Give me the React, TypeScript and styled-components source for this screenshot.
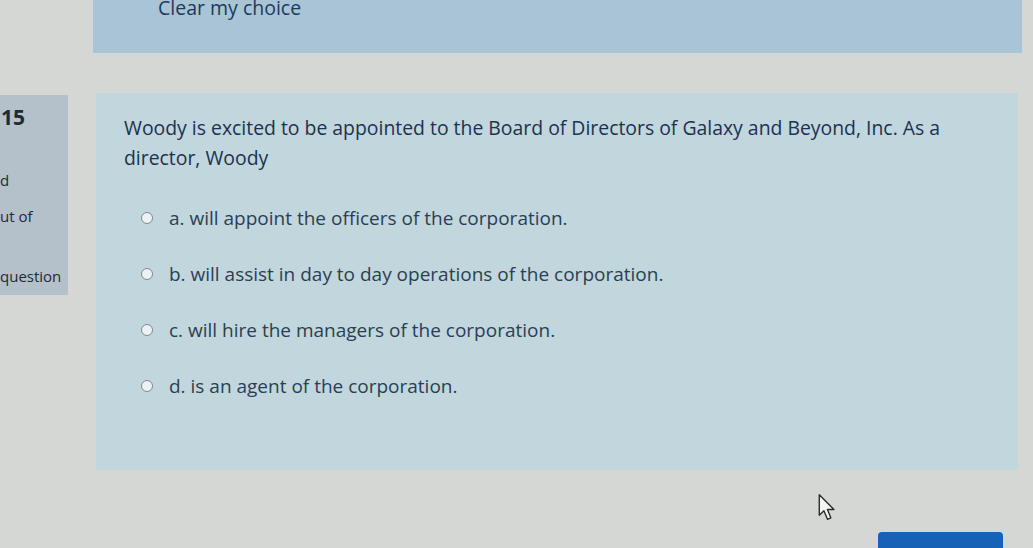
import styled, { createGlobalStyle } from 'styled-components';

const GlobalStyle = createGlobalStyle`
  html, body {
    margin: 0;
    padding: 0;
    background: #d4d7d3;
    font-family: "Open Sans", "Noto Sans", sans-serif;
    overflow: hidden;
  }
`;

const options = [
  'a. will appoint the officers of the corporation.',
  'b. will assist in day to day operations of the corporation.',
  'c. will hire the managers of the corporation.',
  'd. is an agent of the corporation.',
];

export default function App() {
  return (
    <>
      <GlobalStyle />
      <Page>
        <TopPanel>
          <ClearLink>Clear my choice</ClearLink>
        </TopPanel>
        <QuestionRow>
          <InfoColumn>
            <QuestionNo>15</QuestionNo>
            <InfoLine $top={42}>d</InfoLine>
            <InfoLine $top={19}>ut of</InfoLine>
            <InfoLine $top={43}>question</InfoLine>
          </InfoColumn>
          <QuestionPanel>
            <QuestionText>
              Woody is excited to be appointed to the Board of Directors of Galaxy and Beyond, Inc. As a
              director, Woody
            </QuestionText>
            <Answers>
              {options.map((o) => (
                <Answer key={o}>
                  <Radio />
                  <AnswerLabel>{o}</AnswerLabel>
                </Answer>
              ))}
            </Answers>
          </QuestionPanel>
        </QuestionRow>
        <Footer>
          <Cursor viewBox="0 0 14 22" width="18" height="29">
            <path
              d="M1 1 L1 17 L4.6 13.6 L7.4 20.2 L10 19 L7.3 12.6 L12.4 12.6 Z"
              fill="#f4f6f4"
              stroke="#2a2e30"
              strokeWidth="1.1"
              strokeLinejoin="round"
            />
          </Cursor>
          <NextButton />
        </Footer>
      </Page>
    </>
  );
}

const Page = styled.div`
  width: 1033px;
  height: 548px;
  display: flex;
  flex-direction: column;
`;

const TopPanel = styled.div`
  margin-left: 93px;
  width: 929px;
  height: 53px;
  background: #a9c4d5;
  padding-left: 65px;
  box-sizing: border-box;
`;

const ClearLink = styled.div`
  font-size: 19.5px;
  line-height: 16px;
  color: #1c3a5e;
`;

const QuestionRow = styled.div`
  margin-top: 40px;
  display: flex;
  align-items: flex-start;
`;

const InfoColumn = styled.div`
  margin-top: 2px;
  width: 68px;
  height: 200px;
  background: #b4c1ca;
  display: flex;
  flex-direction: column;
  color: #1f2a33;
  box-sizing: border-box;
  padding-top: 9px;
`;

const QuestionNo = styled.div`
  font-size: 21px;
  font-weight: 700;
  padding-left: 1px;
  line-height: 26px;
`;

const InfoLine = styled.div<{ $top: number }>`
  margin-top: ${(p) => p.$top}px;
  font-size: 15px;
  line-height: 17px;
`;

const QuestionPanel = styled.div`
  margin-left: 28px;
  width: 922px;
  height: 377px;
  background: #c2d6dd;
  box-sizing: border-box;
  padding: 20px 40px 0 28px;
`;

const QuestionText = styled.div`
  font-size: 19.4px;
  line-height: 30px;
  color: #1b3250;
`;

const Answers = styled.div`
  margin-top: 33px;
  padding-left: 17px;
  display: flex;
  flex-direction: column;
  gap: 32px;
`;

const Answer = styled.div`
  display: flex;
  align-items: center;
  gap: 16px;
  height: 24px;
`;

const Radio = styled.span`
  width: 10px;
  height: 10px;
  border-radius: 50%;
  border: 1.8px solid #7e8a8e;
  background: #eef2f2;
  flex-shrink: 0;
`;

const AnswerLabel = styled.span`
  font-size: 19px;
  color: #2b3f52;
`;

const Footer = styled.div`
  flex: 1;
  display: flex;
  align-items: flex-end;
  justify-content: flex-end;
  padding-right: 30px;
`;

const Cursor = styled.svg`
  align-self: flex-start;
  margin-top: 23px;
  margin-right: 42px;
`;

const NextButton = styled.div`
  width: 125px;
  height: 16px;
  background: #1762b6;
  border-radius: 4px 4px 0 0;
`;
